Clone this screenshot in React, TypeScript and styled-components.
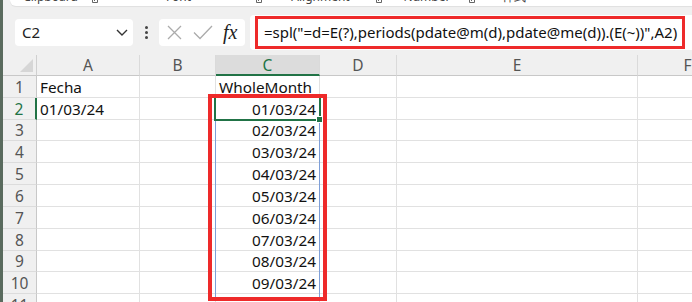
import React from "react";
import styled, { createGlobalStyle } from "styled-components";

const GlobalStyle = createGlobalStyle`
  html, body { margin: 0; padding: 0; background: #f0f0f0; }
  body { font-family: "Noto Sans", "Open Sans", sans-serif; }
`;

const Frame = styled.div`
  width: 692px;
  height: 302px;
  overflow: hidden;
  display: flex;
  background: #f0f0f0;
`;

const WindowEdge = styled.div`
  width: 3px;
  flex: none;
  background: #5a6b5e;
`;

const Main = styled.div`
  flex: 1;
  min-width: 0;
  display: flex;
  flex-direction: column;
`;

const Ribbon = styled.div`
  height: 6px;
  margin-left: 7px;
  background: #ffffff;
  border-bottom-left-radius: 6px;
  box-shadow: 0 1px 1px rgba(0, 0, 0, 0.07);
  overflow: hidden;
  display: flex;
  flex: none;
`;

const RibbonGroup = styled.div<{ $w?: number }>`
  width: ${(p) => (p.$w ? `${p.$w}px` : "auto")};
  flex: ${(p) => (p.$w ? "none" : "1")};
  display: flex;
  align-items: flex-start;
  padding-left: ${(p) => (p.$w ? "0" : "23px")};
`;

const RibbonLabel = styled.div<{ $left?: boolean }>`
  flex: ${(p) => (p.$left ? "none" : "1")};
  text-align: center;
  font-size: 12px;
  line-height: 12px;
  margin-top: -9px;
  color: #444;
  white-space: nowrap;
`;

const Launcher = styled.svg`
  width: 6px;
  height: 6px;
  margin: -3px 4px 0 1px;
  flex: none;
`;

const FormulaBar = styled.div`
  height: 40px;
  margin-top: 6px;
  display: flex;
  align-items: center;
  padding-left: 12px;
  flex: none;
`;

const NameBox = styled.div`
  width: 118px;
  height: 27px;
  box-sizing: border-box;
  background: #ffffff;
  border-radius: 4px;
  display: flex;
  align-items: center;
  justify-content: space-between;
  padding: 0 5px 0 7px;
  font-size: 15px;
  color: #222;
`;

const Dots = styled.div`
  margin-left: 12px;
  display: flex;
  flex-direction: column;
  gap: 2px;
`;

const Dot = styled.span`
  width: 3px;
  height: 3px;
  border-radius: 50%;
  background: #444;
`;

const FxBox = styled.div`
  margin-left: 11px;
  width: 86px;
  height: 27px;
  box-sizing: border-box;
  background: #ffffff;
  border-radius: 4px;
  display: flex;
  align-items: center;
  padding-left: 8px;
`;

const FxText = styled.span`
  margin-left: 10px;
  font-family: "Liberation Serif", "DejaVu Serif", serif;
  font-style: italic;
  font-size: 20px;
  color: #222;
  line-height: 1;
`;

const FormulaField = styled.div`
  margin-left: 5px;
  flex: 1;
  height: 35px;
  background: #ffffff;
  border-radius: 4px 0 0 4px;
  display: flex;
  align-items: center;
  padding: 0 7px 0 5px;
`;

const RedFrame = styled.div`
  flex: 1;
  height: 33px;
  box-sizing: border-box;
  border: 3px solid #ee2a2a;
  display: flex;
  align-items: center;
  padding-left: 6px;
  font-size: 15px;
  color: #111;
  white-space: nowrap;
  overflow: hidden;
`;

const GridWrap = styled.div`
  position: relative;
  margin-top: 3px;
  flex: 1;
`;

const Grid = styled.div<{ $rows: string }>`
  display: grid;
  grid-template-columns: 34px 103px 76px 104px 77px 241px 100px;
  grid-template-rows: ${(p) => p.$rows};
`;

const Corner = styled.div`
  background: #f0f0f0;
  border-right: 1px solid #d0d0d0;
  border-bottom: 1px solid #c8c8c8;
  box-sizing: border-box;
  display: flex;
  align-items: flex-end;
  justify-content: flex-end;
  padding: 0 3px 3px 0;
`;

const ColHead = styled.div<{ $active?: boolean }>`
  box-sizing: border-box;
  background: ${(p) => (p.$active ? "#dcdcdc" : "#f0f0f0")};
  border-right: 1px solid #dadada;
  border-bottom: ${(p) => (p.$active ? "2px solid #217346" : "1px solid #c8c8c8")};
  display: flex;
  align-items: center;
  justify-content: center;
  font-size: 15.5px;
  color: ${(p) => (p.$active ? "#217346" : "#555")};
`;

const RowHead = styled.div<{ $active?: boolean }>`
  box-sizing: border-box;
  background: #f0f0f0;
  border-bottom: 1px solid #dcdcdc;
  border-right: ${(p) => (p.$active ? "2px solid #217346" : "1px solid #c8c8c8")};
  display: flex;
  align-items: center;
  justify-content: center;
  font-size: 15.5px;
  color: ${(p) => (p.$active ? "#217346" : "#555")};
`;

const Cell = styled.div<{ $right?: boolean }>`
  box-sizing: border-box;
  background: #ffffff;
  border-right: 1px solid #e1e1e1;
  border-bottom: 1px solid #e1e1e1;
  display: flex;
  align-items: center;
  justify-content: ${(p) => (p.$right ? "flex-end" : "flex-start")};
  padding: 0 3px 0 3px;
  font-size: 15.3px;
  color: #111;
  white-space: nowrap;
`;

const SpillRange = styled.div`
  position: absolute;
  left: 212px;
  top: 64px;
  width: 105px;
  height: 180px;
  box-sizing: border-box;
  border-left: 1px solid #7e9fd8;
  border-right: 1px solid #7e9fd8;
`;

const Selection = styled.div`
  position: absolute;
  left: 211px;
  top: 41px;
  width: 107px;
  height: 25px;
  box-sizing: border-box;
  border: 2px solid #217346;
`;

const FillHandle = styled.div`
  position: absolute;
  left: 313px;
  top: 61px;
  width: 7px;
  height: 7px;
  box-sizing: border-box;
  background: #217346;
  border: 1px solid #ffffff;
`;

const Annotation = styled.div`
  position: absolute;
  left: 205px;
  top: 39px;
  width: 119px;
  height: 207px;
  box-sizing: border-box;
  border: 4px solid #ee2a2a;
`;

const rowHeights = [21, 22, 22, 21, 22, 22, 22, 22, 22, 21, 22, 22];
const columns = ["A", "B", "C", "D", "E", "F"];

type Row = { [col: string]: { text: string; right?: boolean } };

const data: Row[] = [
  { A: { text: "Fecha" }, C: { text: "WholeMonth" } },
  { A: { text: "01/03/24" }, C: { text: "01/03/24", right: true } },
  ...Array.from({ length: 8 }, (_, i) => ({
    C: { text: `0${i + 2}/03/24`, right: true },
  })),
  {},
];

const ribbonGroups = [
  { label: "Clipboard", w: 92 },
  { label: "Font", w: 164 },
  { label: "Alignment", w: 120 },
  { label: "Number", w: 93 },
];

function LauncherIcon() {
  return (
    <Launcher viewBox="0 0 6 6">
      <path d="M0.5 0.5 V5.5 H5.5 V3 M2 4 L5.5 0.5" stroke="#666" strokeWidth="1" fill="none" />
    </Launcher>
  );
}

export default function App() {
  return (
    <>
      <GlobalStyle />
      <Frame>
        <WindowEdge />
        <Main>
          <Ribbon>
            {ribbonGroups.map((g) => (
              <RibbonGroup key={g.label} $w={g.w}>
                <RibbonLabel>{g.label}</RibbonLabel>
                <LauncherIcon />
              </RibbonGroup>
            ))}
            <RibbonGroup>
              <RibbonLabel $left>样式</RibbonLabel>
            </RibbonGroup>
          </Ribbon>

          <FormulaBar>
            <NameBox>
              <span>C2</span>
              <svg width="12" height="7" viewBox="0 0 12 7">
                <path d="M1 1 L6 6 L11 1" stroke="#333" strokeWidth="1.4" fill="none" />
              </svg>
            </NameBox>
            <Dots>
              <Dot />
              <Dot />
              <Dot />
            </Dots>
            <FxBox>
              <svg width="15" height="15" viewBox="0 0 15 15">
                <path d="M1 1 L14 14 M14 1 L1 14" stroke="#ababab" strokeWidth="1.3" fill="none" />
              </svg>
              <svg width="20" height="15" viewBox="0 0 20 15" style={{ marginLeft: 11 }}>
                <path d="M1 7.5 L7 13.5 L19 1" stroke="#ababab" strokeWidth="1.3" fill="none" />
              </svg>
              <FxText>fx</FxText>
            </FxBox>
            <FormulaField>
              <RedFrame>=spl("=d=E(?),periods(pdate@m(d),pdate@me(d)).(E(~))",A2)</RedFrame>
            </FormulaField>
          </FormulaBar>

          <GridWrap>
            <Grid $rows={rowHeights.map((h) => `${h}px`).join(" ")}>
              <Corner>
                <svg width="13" height="13" viewBox="0 0 13 13">
                  <path d="M13 0 L13 13 L0 13 Z" fill="#d6d6d6" />
                </svg>
              </Corner>
              {columns.map((c) => (
                <ColHead key={c} $active={c === "C"}>
                  {c}
                </ColHead>
              ))}
              {data.map((row, r) => (
                <React.Fragment key={r}>
                  <RowHead $active={r === 1}>{r + 1}</RowHead>
                  {columns.map((c) => (
                    <Cell key={c} $right={row[c]?.right}>
                      {row[c]?.text ?? ""}
                    </Cell>
                  ))}
                </React.Fragment>
              ))}
            </Grid>
            <SpillRange />
            <Selection />
            <FillHandle />
            <Annotation />
          </GridWrap>
        </Main>
      </Frame>
    </>
  );
}
